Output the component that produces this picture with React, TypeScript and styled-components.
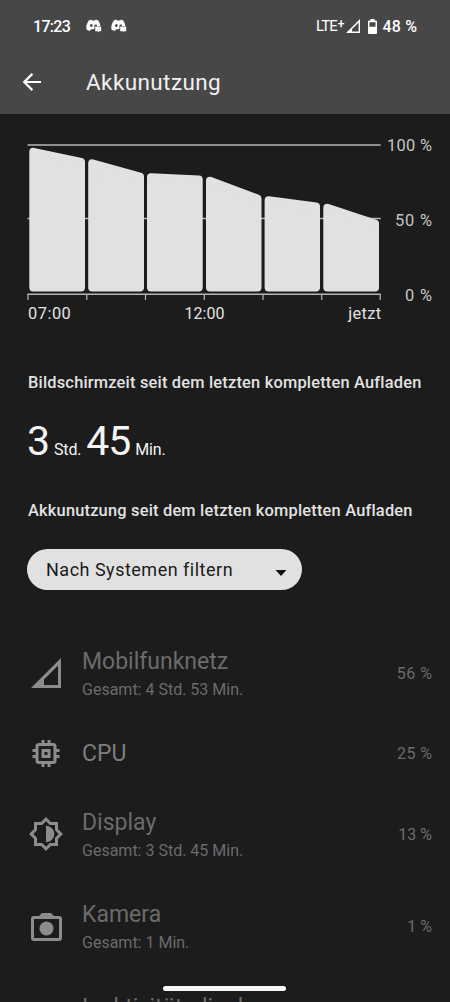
import React from "react";
import styled, { createGlobalStyle } from "styled-components";

const GlobalStyle = createGlobalStyle`
  * { box-sizing: border-box; }
  body { margin: 0; background: #1c1c1c; overflow: hidden; }
`;

const Screen = styled.div`
  position: relative;
  display: flex;
  flex-direction: column;
  width: 450px;
  height: 1002px;
  overflow: hidden;
  background: #1c1c1c;
  color: #e2e2e2;
  font-family: Roboto, "Liberation Sans", sans-serif;
  white-space: nowrap;
  & > * { flex-shrink: 0; }
`;

const Label = styled.span<{ $size: number; $track?: number; $weight?: number; $color?: string }>`
  font-size: ${(p) => p.$size}px;
  letter-spacing: ${(p) => p.$track ?? 0}px;
  margin-right: ${(p) => -(p.$track ?? 0)}px;
  font-weight: ${(p) => p.$weight ?? 400};
  color: ${(p) => p.$color ?? "inherit"};
`;

const Header = styled.header`
  height: 114px;
  background: #474747;
  color: #fff;
`;

const StatusBar = styled.div`
  display: flex;
  align-items: center;
  height: 52px;
  padding: 0 33px 0 33px;
`;

const Notifications = styled.div`
  display: flex;
  gap: 9px;
  margin-left: 15px;
  margin-right: auto;
`;

const Network = styled.div`
  display: flex;
  align-items: center;
  margin-right: 2px;
`;

const Plus = styled.span`
  font-size: 12px;
  font-weight: 500;
  line-height: 10px;
  margin-bottom: 4px;
`;

const BatteryStatus = styled.div`
  display: flex;
  align-items: center;
  gap: 5px;
  margin-left: 8px;
`;

const TitleBar = styled.div`
  display: flex;
  align-items: center;
  height: 60px;
  padding-left: 22px;
  gap: 44px;
`;

const ChartSection = styled.section`
  display: flex;
  height: 190px;
  margin-top: 22px;
  padding-left: 27px;
  padding-right: 18px;
  justify-content: space-between;
`;

const Plot = styled.div`
  width: 354px;
`;

const TimeAxis = styled.div`
  display: grid;
  grid-template-columns: 1fr auto 1fr;
  line-height: 20px;
  margin-top: 2px;
  padding-left: 1px;
  span:last-child { text-align: right; }
`;

const PercentAxis = styled.div`
  display: flex;
  flex-direction: column;
  justify-content: space-between;
  align-items: flex-end;
  height: 170px;
  line-height: 20px;
  color: #c4c7c2;
`;

const Heading = styled.h2<{ $top: number }>`
  margin: ${(p) => p.$top}px 0 0 28px;
  font-size: 16.4px;
  line-height: 20px;
  font-weight: 500;
  letter-spacing: 0.2px;
`;

const ScreenTime = styled.div`
  display: flex;
  align-items: baseline;
  height: 48px;
  line-height: 48px;
  margin: 24px 0 0 27px;
  color: #f4f4f4;
`;

const Unit = styled.span`
  font-size: 16px;
  letter-spacing: -0.2px;
  margin: 0 5px 0 4px;
`;

const Filter = styled.button`
  display: flex;
  align-items: center;
  justify-content: space-between;
  width: 275px;
  height: 41px;
  margin: 28px 0 0 27px;
  padding: 0 15px 0 19px;
  border: 0;
  border-radius: 21px;
  background: #e1e1e1;
  color: #1b1b1b;
  font-family: inherit;
  svg { margin-top: 7px; }
`;

const List = styled.ul`
  list-style: none;
  margin: 36px 0 0;
  padding: 0;
`;

const Row = styled.li<{ $height: number }>`
  display: flex;
  align-items: center;
  height: ${(p) => p.$height}px;
  padding: 0 18px 0 28px;
  color: #6b6b6b;
`;

const IconSlot = styled.div`
  display: flex;
  justify-content: center;
  width: 36px;
  margin-right: 18px;
  color: #8c8c8c;
`;

const RowText = styled.div<{ $top?: number; $bottom?: number }>`
  display: flex;
  flex-direction: column;
  flex: 1;
  line-height: 28px;
  padding-top: ${(p) => p.$top ?? 0}px;
  padding-bottom: ${(p) => p.$bottom ?? 0}px;
`;

const HomeBar = styled.div`
  position: absolute;
  left: 163px;
  bottom: 11px;
  width: 123px;
  height: 5px;
  border-radius: 3px;
  background: #f7f7f7;
`;

const ChatBubbleFace = () => (
  <svg width="16" height="14" viewBox="0 0 16 14">
    <path fill="#fff" d="M2.800 1.400 5.200.5l.7.900h3.200l.7-.9 2.400.900c1.200 1.700 2 3.600 2.200 6V9l-9.700 1.500-1 1.400C2.300 11.600 1.200 11 .3 10.200.1 6.800 1 3.900 2.800 1.400Z" />
    <ellipse cx="5.300" cy="6.600" rx="1.300" ry="1.500" fill="#474747" />
    <path fill="#474747" d="M8.500 8.600C8 6.600 8.600 5.400 9.700 5.400c.9 0 1.300.6 1.300 1.500H16v7H8.500Z" />
    <path fill="#fff" d="M9.200 7.500h6v4.800h-2l-1.200 1.200v-1.200H9.200Z" />
  </svg>
);

const SignalIcon = ({ size }: { size: number }) => (
  <svg width={size} height={size} viewBox="0 0 30 30">
    <path fill="currentColor" fillRule="evenodd" d="M30 0v30H0ZM27 7.500 13 21.500V27h14Z" />
  </svg>
);

const BatteryIcon = () => (
  <svg width="9" height="15" viewBox="0 0 9 15">
    <path fill="#fff" fillRule="evenodd" d="M2.500 0h4v1.500H8a1 1 0 0 1 1 1V14a1 1 0 0 1-1 1H1a1 1 0 0 1-1-1V2.500a1 1 0 0 1 1-1h1.500ZM1.500 3.200v4.600h6V3.200Z" />
  </svg>
);

const BackIcon = () => (
  <svg width="20" height="18" viewBox="0 0 20 18" fill="none" stroke="#fff" strokeWidth="2.200">
    <path d="M19 9H2.500M10.400.9 2.200 9l8.200 8.100" />
  </svg>
);

const CpuIcon = () => (
  <svg width="37" height="37" viewBox="0 0 24 24" fill="currentColor">
    <path d="M15 9H9v6h6V9zm-2 4h-2v-2h2v2zm8-2V9h-2V7c0-1.100-.9-2-2-2h-2V3h-2v2h-2V3H9v2H7c-1.100 0-2 .9-2 2v2H3v2h2v2H3v2h2v2c0 1.100.9 2 2 2h2v2h2v-2h2v2h2v-2h2c1.100 0 2-.9 2-2v-2h2v-2h-2v-2h2zm-4 6H7V7h10v10z" />
  </svg>
);

const DisplayIcon = () => (
  <svg width="36" height="36" viewBox="0 0 24 24" fill="currentColor">
    <path d="M20 15.310 23.310 12 20 8.690V4h-4.690L12 .69 8.690 4H4v4.690L.69 12 4 15.310V20h4.690L12 23.310 15.310 20H20v-4.690zM18 9.520 20.480 12 18 14.480V18h-3.520L12 20.480 9.520 18H6v-3.520L3.520 12 6 9.520V6h3.520L12 3.520 14.480 6H18v3.520zM12 6.500v11c3.030 0 5.500-2.470 5.500-5.500S15.030 6.500 12 6.500z" />
  </svg>
);

const CameraIcon = () => (
  <svg width="31" height="28" viewBox="0 0 31 28" fill="currentColor">
    <path fillRule="evenodd" d="M11 0h9l3 3h5a3 3 0 0 1 3 3v19a3 3 0 0 1-3 3H3a3 3 0 0 1-3-3V6a3 3 0 0 1 3-3h5ZM3 6v19h25V6Z" />
    <circle cx="15.500" cy="15.500" r="7" />
  </svg>
);

const PhoneIcon = () => (
  <svg width="22" height="34" viewBox="0 0 22 34" fill="none" stroke="currentColor" strokeWidth="3">
    <rect x="1.500" y="1.500" width="19" height="31" rx="2" />
  </svg>
);

const bars = [
  [29.3, 147.5, 85, 158],
  [88.2, 159, 144, 172.5],
  [147, 173, 202.7, 175.5],
  [206, 176.5, 261.5, 194.5],
  [264.6, 196, 320, 202.5],
  [323.3, 203.5, 379, 219.5],
];
const ticks = [28, 86.8, 145.5, 204.3, 263, 321.7, 380.2];

const ChartSvg = styled.svg`
  display: block;
`;

const BatteryChart = () => (
  <ChartSvg width="354" height="166" viewBox="27 136 354 166">
    <path d="M27.500 145H380.700M27.500 218.500H380.700" stroke="#b4b6ae" strokeWidth="1.300" />
    {bars.map(([x1, y1, x2, y2]) => (
      <path
        key={x1}
        d={`M${x1 + 4} ${y1 + 4.3}L${x2 - 4} ${y2 + 4}V287.500H${x1 + 4}Z`}
        fill="#e1e1e1"
        stroke="#e1e1e1"
        strokeWidth="8"
        strokeLinejoin="round"
      />
    ))}
    <path d="M27.500 294.200H380.700" stroke="#b4b6ae" strokeWidth="1.400" />
    {ticks.map((x) => (
      <path key={x} d={`M${x} 294V300`} stroke="#b4b6ae" strokeWidth="1.200" />
    ))}
  </ChartSvg>
);

export default function App() {
  return (
    <Screen>
      <GlobalStyle />
      <Header>
        <StatusBar>
          <Label $size={16} $weight={500} $track={-0.7}>17:23</Label>
          <Notifications>
            <ChatBubbleFace />
            <ChatBubbleFace />
          </Notifications>
          <Network>
            <Label $size={15} $track={-0.9}>LTE</Label>
            <Plus>+</Plus>
          </Network>
          <SignalIcon size={14} />
          <BatteryStatus>
            <BatteryIcon />
            <Label $size={16} $weight={500} $track={0.2}>48 %</Label>
          </BatteryStatus>
        </StatusBar>
        <TitleBar>
          <BackIcon />
          <Label $size={22.5} $track={0.4} $color="#f0f0f0">Akkunutzung</Label>
        </TitleBar>
      </Header>
      <ChartSection>
        <Plot>
          <BatteryChart />
          <TimeAxis>
            <Label $size={16.4} $track={0.5}>07:00</Label>
            <Label $size={16}>12:00</Label>
            <Label $size={16.4} $track={0.3}>jetzt</Label>
          </TimeAxis>
        </Plot>
        <PercentAxis>
          <Label $size={16.4} $track={0.3}>100 %</Label>
          <Label $size={16.4} $track={0.8}>50 %</Label>
          <Label $size={16.4} $track={0.8}>0 %</Label>
        </PercentAxis>
      </ChartSection>
      <Heading $top={47}>Bildschirmzeit seit dem letzten kompletten Aufladen</Heading>
      <ScreenTime>
        <Label $size={41} $track={-1}>3</Label>
        <Unit>Std.</Unit>
        <Label $size={41} $track={-1}>45</Label>
        <Unit>Min.</Unit>
      </ScreenTime>
      <Heading $top={36}>Akkunutzung seit dem letzten kompletten Aufladen</Heading>
      <Filter>
        <Label $size={18} $track={0.5}>Nach Systemen filtern</Label>
        <svg width="12" height="6" viewBox="0 0 12 6"><path d="M.5 0h11L6 6Z" fill="#111" /></svg>
      </Filter>
      <List>
        <Row $height={94}>
          <IconSlot><SignalIcon size={30} /></IconSlot>
          <RowText $top={5}>
            <Label $size={23}>Mobilfunknetz</Label>
            <Label $size={16}>Gesamt: 4 Std. 53 Min.</Label>
          </RowText>
          <Label $size={16} $track={0.5}>56 %</Label>
        </Row>
        <Row $height={67}>
          <IconSlot><CpuIcon /></IconSlot>
          <RowText><Label $size={23} $color="#7c7c7c">CPU</Label></RowText>
          <Label $size={16} $track={0.4}>25 %</Label>
        </Row>
        <Row $height={94}>
          <IconSlot><DisplayIcon /></IconSlot>
          <RowText $top={5}>
            <Label $size={23}>Display</Label>
            <Label $size={16}>Gesamt: 3 Std. 45 Min.</Label>
          </RowText>
          <Label $size={16}>13 %</Label>
        </Row>
        <Row $height={91}>
          <IconSlot><CameraIcon /></IconSlot>
          <RowText $top={5}>
            <Label $size={23}>Kamera</Label>
            <Label $size={16}>Gesamt: 1 Min.</Label>
          </RowText>
          <Label $size={16}>1 %</Label>
        </Row>
        <Row $height={93}>
          <IconSlot><PhoneIcon /></IconSlot>
          <RowText $bottom={21}>
            <Label $size={23}>Inaktivitätsdisplay</Label>
          </RowText>
        </Row>
      </List>
      <HomeBar />
    </Screen>
  );
}
